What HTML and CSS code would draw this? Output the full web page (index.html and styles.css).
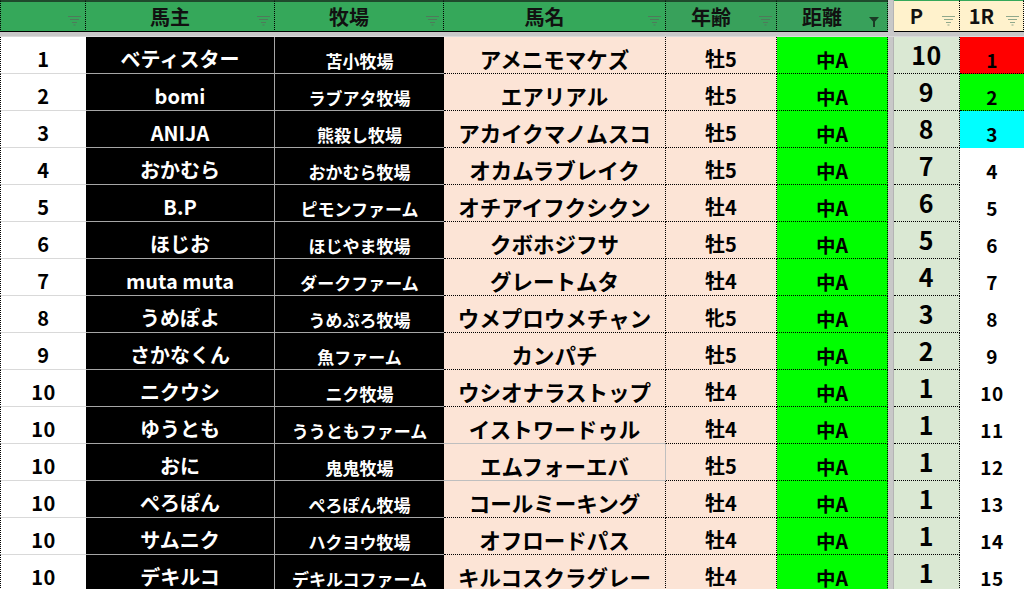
FILE: index.html
```html
<!DOCTYPE html>
<html lang="ja">
<head>
<meta charset="utf-8">
<title>ランキング</title>
<link rel="stylesheet" href="styles.css">
</head>
<body>
<div class="sheet">
  <div class="freeze-v"></div>
  <div class="freeze-h"></div>

  <div class="hd ha"><svg class="flt" viewBox="0 0 13 10"><path d="M0 .5h13M2 3.5h9M4 6.5h5M5.5 9h2"/></svg></div>
  <div class="hd">馬主<svg class="flt" viewBox="0 0 13 10"><path d="M0 .5h13M2 3.5h9M4 6.5h5M5.5 9h2"/></svg></div>
  <div class="hd">牧場<svg class="flt" viewBox="0 0 13 10"><path d="M0 .5h13M2 3.5h9M4 6.5h5M5.5 9h2"/></svg></div>
  <div class="hd">馬名<svg class="flt" viewBox="0 0 13 10"><path d="M0 .5h13M2 3.5h9M4 6.5h5M5.5 9h2"/></svg></div>
  <div class="hd dk">年齢<svg class="flt" viewBox="0 0 13 10"><path d="M0 .5h13M2 3.5h9M4 6.5h5M5.5 9h2"/></svg></div>
  <div class="hd dk">距離<svg class="flt on" viewBox="0 0 10 10"><path d="M0 0h10L6 4.5V10H4V4.5z"/></svg></div>
  <div class="hd cr">P<svg class="flt" viewBox="0 0 13 10"><path d="M0 .5h13M2 3.5h9M4 6.5h5M5.5 9h2"/></svg></div>
  <div class="hd cr">1R<svg class="flt" viewBox="0 0 13 10"><path d="M0 .5h13M2 3.5h9M4 6.5h5M5.5 9h2"/></svg></div>

  <div class="c a">1</div><div class="c b">ベティスター</div><div class="c m">苫小牧場</div><div class="c d">アメニモマケズ</div><div class="c e">牡5</div><div class="c f">中A</div><div class="c g">10</div><div class="c h red">1</div>
  <div class="c a">2</div><div class="c b">bomi</div><div class="c m">ラブアタ牧場</div><div class="c d">エアリアル</div><div class="c e">牡5</div><div class="c f">中A</div><div class="c g">9</div><div class="c h grn">2</div>
  <div class="c a">3</div><div class="c b">ANIJA</div><div class="c m">熊殺し牧場</div><div class="c d">アカイクマノムスコ</div><div class="c e">牡5</div><div class="c f">中A</div><div class="c g">8</div><div class="c h cyan">3</div>
  <div class="c a">4</div><div class="c b">おかむら</div><div class="c m">おかむら牧場</div><div class="c d">オカムラブレイク</div><div class="c e">牡5</div><div class="c f">中A</div><div class="c g">7</div><div class="c h">4</div>
  <div class="c a">5</div><div class="c b">B.P</div><div class="c m">ピモンファーム</div><div class="c d">オチアイフクシクン</div><div class="c e">牡4</div><div class="c f">中A</div><div class="c g">6</div><div class="c h">5</div>
  <div class="c a">6</div><div class="c b">ほじお</div><div class="c m">ほじやま牧場</div><div class="c d">クボホジフサ</div><div class="c e">牡5</div><div class="c f">中A</div><div class="c g">5</div><div class="c h">6</div>
  <div class="c a">7</div><div class="c b">muta muta</div><div class="c m">ダークファーム</div><div class="c d">グレートムタ</div><div class="c e">牡4</div><div class="c f">中A</div><div class="c g">4</div><div class="c h">7</div>
  <div class="c a">8</div><div class="c b">うめぽよ</div><div class="c m">うめぷろ牧場</div><div class="c d">ウメプロウメチャン</div><div class="c e">牝5</div><div class="c f">中A</div><div class="c g">3</div><div class="c h">8</div>
  <div class="c a">9</div><div class="c b">さかなくん</div><div class="c m">魚ファーム</div><div class="c d">カンパチ</div><div class="c e">牡5</div><div class="c f">中A</div><div class="c g">2</div><div class="c h">9</div>
  <div class="c a">10</div><div class="c b">ニクウシ</div><div class="c m">ニク牧場</div><div class="c d">ウシオナラストップ</div><div class="c e">牡4</div><div class="c f">中A</div><div class="c g">1</div><div class="c h">10</div>
  <div class="c a">10</div><div class="c b">ゆうとも</div><div class="c m">ううともファーム</div><div class="c d gb">イストワードゥル</div><div class="c e">牡4</div><div class="c f">中A</div><div class="c g">1</div><div class="c h">11</div>
  <div class="c a">10</div><div class="c b">おに</div><div class="c m">鬼鬼牧場</div><div class="c d gb gr">エムフォーエバ</div><div class="c e">牡5</div><div class="c f">中A</div><div class="c g">1</div><div class="c h">12</div>
  <div class="c a">10</div><div class="c b">ぺろぽん</div><div class="c m">ぺろぽん牧場</div><div class="c d">コールミーキング</div><div class="c e">牡4</div><div class="c f">中A</div><div class="c g">1</div><div class="c h">13</div>
  <div class="c a">10</div><div class="c b">サムニク</div><div class="c m">ハクヨウ牧場</div><div class="c d">オフロードパス</div><div class="c e">牡4</div><div class="c f">中A</div><div class="c g">1</div><div class="c h">14</div>
  <div class="c a">10</div><div class="c b">デキルコ</div><div class="c m">デキルコファーム</div><div class="c d">キルコスクラグレー</div><div class="c e">牡4</div><div class="c f">中A</div><div class="c g">1</div><div class="c h">15</div>
</div>
</body>
</html>
```

FILE: styles.css
```css
html, body {
  margin: 0;
  padding: 0;
  background: #ffffff;
  overflow: hidden;
}

body {
  font-family: "Noto Sans CJK JP", "Noto Sans", sans-serif;
  color: #000000;
}

.sheet {
  display: grid;
  grid-template-columns: 86px 189px 169px 222px 111px 111px 6px 66px 64px;
  grid-template-rows: 32px 5px repeat(15, 37px);
  width: 1024px;
}

.freeze-v {
  grid-column: 7;
  grid-row: 1 / -1;
  background: #c8c8c8;
  border-right: 1px solid #b4b4b4;
}

.freeze-h {
  grid-column: 1 / -1;
  grid-row: 2;
  background: #c8c8c8;
  border-bottom: 1px solid #dadada;
}

/* header */
.hd {
  position: relative;
  box-sizing: border-box;
  display: flex;
  align-items: center;
  justify-content: center;
  padding-top: 1px;
  padding-right: 20px;
  background: #35a85a;
  border-top: 2px solid #1f4a2c;
  border-bottom: 1px solid #000000;
  border-right: 1px dotted #000000;
  font-size: 20px;
  font-weight: 700;
  line-height: 1;
  color: #111111;
}

.hd.ha {
  border-left: 1px dotted #000000;
}

.hd.dk {
  background: #38a15b;
}

.hd.cr {
  background: #fff2cc;
  border-top: 1px solid #35a85a;
  padding-top: 0;
}

.flt {
  position: absolute;
  right: 4px;
  top: 14px;
  width: 13px;
  height: 10px;
  stroke: #4f7a5b;
  stroke-width: 1.2;
  fill: none;
}

.hd.cr .flt {
  stroke: #8fa88c;
  top: 15px;
}

.flt.on {
  width: 10px;
  right: 8px;
  top: 15px;
  stroke: none;
  fill: #1b3b25;
}

/* body cells */
.c {
  box-sizing: border-box;
  display: flex;
  align-items: flex-end;
  justify-content: center;
  padding-bottom: 4px;
  line-height: 1;
  font-weight: 700;
  white-space: nowrap;
  border-bottom: 1px solid transparent;
}

.a {
  background: #ffffff;
  border-left: 1px dotted #000000;
  border-bottom-color: #d9d9d9;
  font-size: 20px;
  letter-spacing: 0.5px;
}

.b {
  background: #000000;
  color: #ffffff;
  border-bottom-color: #a6a6a6;
  border-right: 1px solid #a6a6a6;
  font-size: 20px;
}

.m {
  background: #000000;
  color: #ffffff;
  border-bottom-color: #a6a6a6;
  font-size: 17px;
}

.d {
  background: #fce4d6;
  border-bottom: 1px dotted #000000;
  border-right: 1px dotted #000000;
  font-size: 21.5px;
}

.d.gb {
  border-bottom: 1px solid #bfbfbf;
}

.d.gr {
  border-right: 1px solid #bfbfbf;
}

.e {
  background: #fce4d6;
  border-bottom: 1px dotted #000000;
  border-right: 1px dotted #000000;
  font-size: 20px;
}

.f {
  background: #00ff00;
  border-bottom: 1px dotted #000000;
  border-right: 1px dotted #000000;
  font-size: 19.5px;
}

.g {
  background: #dae8d3;
  border-bottom: 1px dotted #000000;
  border-right: 1px dotted #000000;
  align-items: center;
  padding-bottom: 2px;
  font-size: 25px;
  letter-spacing: 0.5px;
}

.h {
  background: #ffffff;
  font-size: 19px;
  letter-spacing: 0.5px;
}

.h.red {
  background: #ff0000;
  border-bottom: 1px dotted #000000;
}

.h.grn {
  background: #00ff00;
  border-bottom: 1px dotted #000000;
}

.h.cyan {
  background: #00ffff;
}
```
